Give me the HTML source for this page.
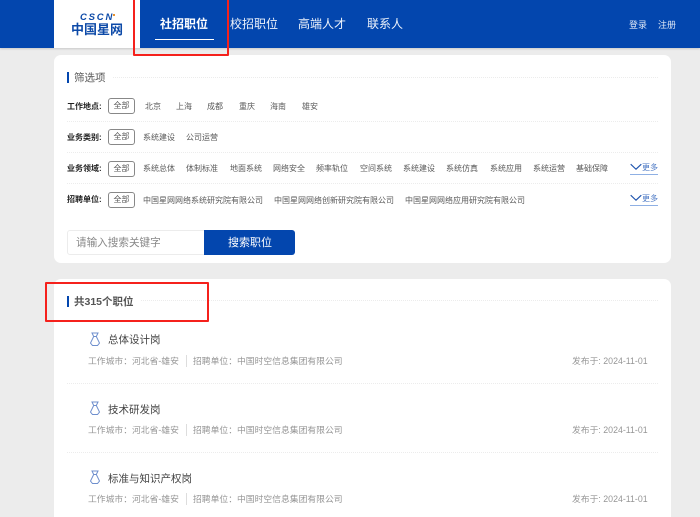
<!DOCTYPE html>
<html lang="zh">
<head>
<meta charset="utf-8">
<title>社招职位</title>
<style>
html,body{margin:0;padding:0;width:700px;height:517px;overflow:hidden}
body{background:#ececec;font-family:"Liberation Sans","Noto Sans CJK SC",sans-serif}
#w{position:relative;width:700px;height:517px;overflow:hidden;background:#ececec}
.a{position:absolute}
.t{position:absolute;white-space:nowrap;line-height:16px;height:16px}
.hd{left:0;top:0;width:700px;height:48px;background:#0346ae;box-shadow:0 1px 2px rgba(0,0,0,.15)}
.nav{font-size:12px;color:#eef3fb;line-height:20px;height:20px;top:14px}
.card{left:54px;width:617px;background:#fff;border-radius:7px}
.sec{font-size:10.5px;color:#555}
.lb{font-size:8px;font-weight:700;color:#222;left:67px}
.o{font-size:8px;color:#5a5a5a}
.all{position:absolute;left:108px;width:27px;height:16px;box-sizing:border-box;border:1px solid #888;border-radius:3px;font-size:8px;line-height:14px;text-align:center;color:#555;background:#fff}
.dash{left:67px;width:591px;height:0;border-top:1px dotted #ececec}
.more{font-size:8px;color:#4a77c4;left:642px}
.ul{left:630px;width:28px;height:1px;background:#8fb0e4}
.jt{font-size:10.5px;color:#444;left:108px}
.jm{font-size:8.8px;color:#969696}
.red{border:2px solid #f5211c;box-sizing:border-box;border-radius:1px;z-index:5}
</style>
</head>
<body>
<div id="w">
<div class="a hd"></div>
<div class="a" style="left:54px;top:0;width:86px;height:48px;background:#fff"></div>
<div class="t" style="left:80px;top:13px;font-size:9.5px;font-weight:700;font-style:italic;color:#0d4aa8;letter-spacing:1.8px;line-height:9px;height:9px">CSCN</div>
<div class="a" style="left:113px;top:14px;width:2px;height:2px;background:#e8912d"></div>
<div class="t" style="left:71px;top:22px;font-size:13px;font-weight:700;color:#0d4aa8;line-height:15px;height:15px">中国星网</div>

<div class="t nav" style="left:160px;font-weight:700;color:#fff">社招职位</div>
<div class="a" style="left:155px;top:39px;width:59px;height:1px;background:#fff"></div>
<div class="t nav" style="left:230px">校招职位</div>
<div class="t nav" style="left:298px">高端人才</div>
<div class="t nav" style="left:367px">联系人</div>
<div class="t" style="left:629px;top:17px;font-size:9px;color:#dfe8f6">登录</div>
<div class="t" style="left:658px;top:17px;font-size:9px;color:#dfe8f6">注册</div>
<div class="a red" style="left:133px;top:-2px;width:96px;height:58px"></div>

<div class="a card" style="top:55px;height:208px"></div>
<div class="a" style="left:67px;top:72px;width:2px;height:11px;background:#0346ae"></div>
<div class="t sec" style="left:74px;top:70px">筛选项</div>
<div class="a dash" style="left:113px;width:545px;top:77px"></div>

<div class="t lb" style="top:99px">工作地点:</div>
<div class="all" style="top:98px">全部</div>
<div class="t o" style="left:145px;top:99px">北京</div>
<div class="t o" style="left:176px;top:99px">上海</div>
<div class="t o" style="left:207px;top:99px">成都</div>
<div class="t o" style="left:239px;top:99px">重庆</div>
<div class="t o" style="left:270px;top:99px">海南</div>
<div class="t o" style="left:302px;top:99px">雄安</div>
<div class="a dash" style="top:121px"></div>

<div class="t lb" style="top:130px">业务类别:</div>
<div class="all" style="top:129px">全部</div>
<div class="t o" style="left:143px;top:130px">系统建设</div>
<div class="t o" style="left:186px;top:130px">公司运营</div>
<div class="a dash" style="top:152px"></div>

<div class="t lb" style="top:161px">业务领域:</div>
<div class="all" style="top:161px">全部</div>
<div class="t o" style="left:143px;top:161px">系统总体</div>
<div class="t o" style="left:186px;top:161px">体制标准</div>
<div class="t o" style="left:230px;top:161px">地面系统</div>
<div class="t o" style="left:273px;top:161px">网络安全</div>
<div class="t o" style="left:316px;top:161px">频率轨位</div>
<div class="t o" style="left:360px;top:161px">空间系统</div>
<div class="t o" style="left:403px;top:161px">系统建设</div>
<div class="t o" style="left:446px;top:161px">系统仿真</div>
<div class="t o" style="left:490px;top:161px">系统应用</div>
<div class="t o" style="left:533px;top:161px">系统运营</div>
<div class="t o" style="left:576px;top:161px">基础保障</div>
<svg class="a" style="left:630px;top:163px" width="12" height="8" viewBox="0 0 12 8"><path d="M.7 1.2 6 6.2 11.3 1.2" fill="none" stroke="#1c52ad" stroke-width="1.1"/></svg>
<div class="t more" style="top:160px">更多</div>
<div class="a ul" style="top:174px"></div>
<div class="a dash" style="top:183px"></div>

<div class="t lb" style="top:192px">招聘单位:</div>
<div class="all" style="top:192px">全部</div>
<div class="t o" style="left:143px;top:193px">中国星网网络系统研究院有限公司</div>
<div class="t o" style="left:274px;top:193px">中国星网网络创新研究院有限公司</div>
<div class="t o" style="left:405px;top:193px">中国星网网络应用研究院有限公司</div>
<svg class="a" style="left:630px;top:194px" width="12" height="8" viewBox="0 0 12 8"><path d="M.7 1.2 6 6.2 11.3 1.2" fill="none" stroke="#1c52ad" stroke-width="1.1"/></svg>
<div class="t more" style="top:191px">更多</div>
<div class="a ul" style="top:205px"></div>

<div class="a" style="left:67px;top:230px;width:138px;height:25px;box-sizing:border-box;border:1px solid #ececec;border-radius:3px 0 0 3px"></div>
<div class="t" style="left:76px;top:235px;font-size:10.6px;color:#888">请输入搜索关键字</div>
<div class="a" style="left:204px;top:230px;width:91px;height:25px;background:#0346ae;border-radius:0 3px 3px 0"></div>
<div class="t" style="left:228px;top:235px;font-size:11px;color:#fff">搜索职位</div>

<div class="a card" style="top:279px;height:238px;border-radius:7px 7px 0 0"></div>
<div class="a" style="left:67px;top:296px;width:2px;height:11px;background:#0346ae"></div>
<div class="t" style="left:74px;top:294px;font-size:10.5px;font-weight:700;color:#555">共315个职位</div>
<div class="a dash" style="left:141px;width:517px;top:300px"></div>
<div class="a red" style="left:45px;top:282px;width:164px;height:40px"></div>

<svg class="a" style="left:89px;top:332px" width="12" height="14" viewBox="0 0 12 14"><path d="M3 1H9L7.3 4.5 10.5 11 8.5 13.5H3.5L1.5 11 4.7 4.5ZM4.7 4.5H7.3" fill="none" stroke="#6f8fcd" stroke-width="1"/></svg>
<div class="t jt" style="top:332px">总体设计岗</div>
<div class="t jm" style="left:88px;top:353px">工作城市：河北省-雄安</div>
<div class="a" style="left:186px;top:355px;width:1px;height:12px;background:#ddd"></div>
<div class="t jm" style="left:193px;top:353px">招聘单位：中国时空信息集团有限公司</div>
<div class="t jm" style="left:572px;top:353px">发布于: 2024-11-01</div>
<div class="a dash" style="top:383px"></div>

<svg class="a" style="left:89px;top:401px" width="12" height="14" viewBox="0 0 12 14"><path d="M3 1H9L7.3 4.5 10.5 11 8.5 13.5H3.5L1.5 11 4.7 4.5ZM4.7 4.5H7.3" fill="none" stroke="#6f8fcd" stroke-width="1"/></svg>
<div class="t jt" style="top:402px">技术研发岗</div>
<div class="t jm" style="left:88px;top:422px">工作城市：河北省-雄安</div>
<div class="a" style="left:186px;top:424px;width:1px;height:12px;background:#ddd"></div>
<div class="t jm" style="left:193px;top:422px">招聘单位：中国时空信息集团有限公司</div>
<div class="t jm" style="left:572px;top:422px">发布于: 2024-11-01</div>
<div class="a dash" style="top:452px"></div>

<svg class="a" style="left:89px;top:470px" width="12" height="14" viewBox="0 0 12 14"><path d="M3 1H9L7.3 4.5 10.5 11 8.5 13.5H3.5L1.5 11 4.7 4.5ZM4.7 4.5H7.3" fill="none" stroke="#6f8fcd" stroke-width="1"/></svg>
<div class="t jt" style="top:471px">标准与知识产权岗</div>
<div class="t jm" style="left:88px;top:491px">工作城市：河北省-雄安</div>
<div class="a" style="left:186px;top:493px;width:1px;height:12px;background:#ddd"></div>
<div class="t jm" style="left:193px;top:491px">招聘单位：中国时空信息集团有限公司</div>
<div class="t jm" style="left:572px;top:491px">发布于: 2024-11-01</div>
</div>
</body>
</html>
